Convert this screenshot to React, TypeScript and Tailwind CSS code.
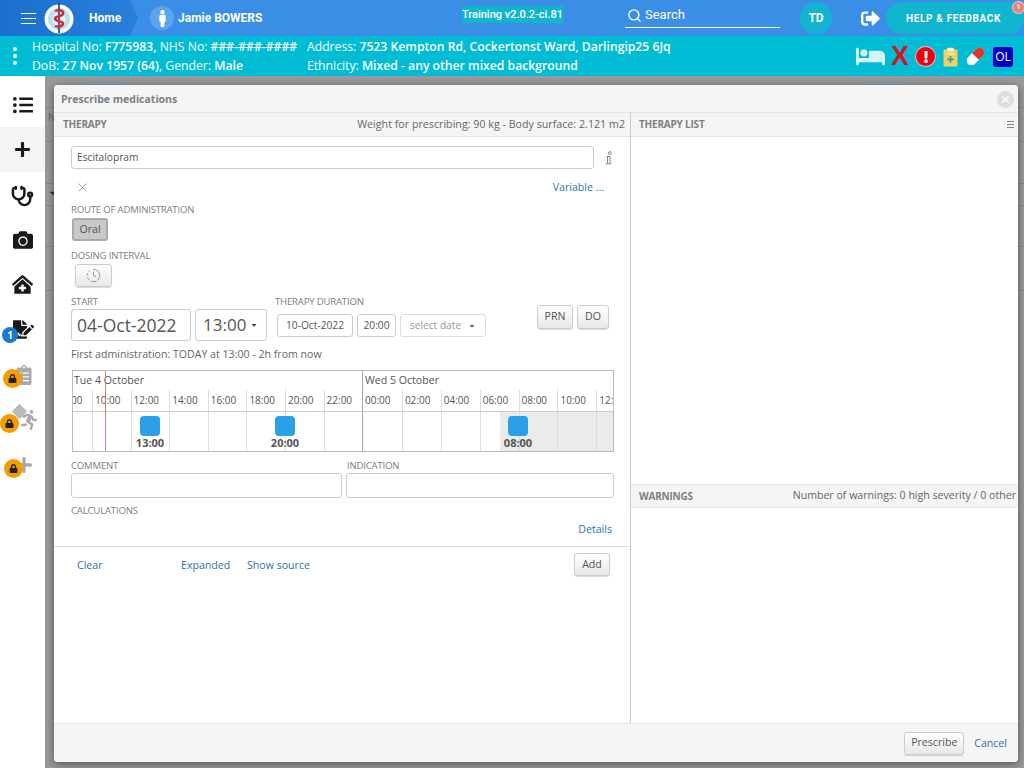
import React from "react";
import { Search, X, ClockFading, Stethoscope } from "lucide-react";
import {
  FaListUl,
  FaPlus,
  FaCamera,
  FaClinicMedical,
  FaFileSignature,
  FaClipboardList,
  FaRunning,
  FaLock,
  FaBed,
  FaMale,
  FaSignOutAlt,
  FaExclamation,
  FaCaretDown,
} from "react-icons/fa";

const HOURS_A = ["10:00", "12:00", "14:00", "16:00", "18:00", "20:00", "22:00"];
const HOURS_B = ["00:00", "02:00", "04:00", "06:00", "08:00", "10:00"];

function Logo() {
  return (
    <svg viewBox="0 0 30 32" className="w-[30px] h-[32px]">
      <circle cx="15" cy="17" r="14.5" fill="#fff" />
      <circle cx="15" cy="17" r="11" fill="#b9dff0" />
      <circle cx="15" cy="17" r="6.5" fill="#e8f5fb" />
      <path d="M15 1v30" stroke="#1c3f7a" strokeWidth="1.6" />
      <path d="M11 9c5-2 9 0 8 3s-9 2-8 5 9 2 8 5-6 3-8 2" fill="none" stroke="#d22a35" strokeWidth="2.4" />
    </svg>
  );
}

function PillIcon() {
  return (
    <svg viewBox="0 0 22 22" className="w-[21px] h-[21px]">
      <g transform="rotate(-45 11 11)">
        <rect x="0" y="6" width="22" height="10" rx="5" fill="#fff" />
        <path d="M11 6h6a5 5 0 0 1 0 10h-6z" fill="#e0352b" />
      </g>
    </svg>
  );
}

function ClipboardIcon() {
  return (
    <svg viewBox="0 0 16 20" className="w-[15px] h-[20px]">
      <rect x="0.5" y="2" width="15" height="18" rx="1.5" fill="#f4cf62" />
      <rect x="4.5" y="0" width="7" height="4" rx="1" fill="#fff3c4" />
      <rect x="3.5" y="6" width="9" height="1.2" fill="#fff3c4" />
      <path d="M8 9v7M4.5 12.5h7" stroke="#1aa3c0" strokeWidth="1.8" />
    </svg>
  );
}

function InfoIcon() {
  return (
    <svg viewBox="0 0 7 14" className="w-[7px] h-[14px]" fill="none" stroke="#888" strokeWidth="1">
      <circle cx="4.8" cy="2" r="1.4" />
      <path d="M1.5 5.5h3.5v7M0.5 12.8h6M2.5 5.5v7" />
    </svg>
  );
}

function LockBadge({ className }: { className: string }) {
  return (
    <span className={`absolute w-[19px] h-[19px] rounded-full bg-[#f59c00] flex items-center justify-center ${className}`}>
      <FaLock className="text-[9px] text-[#222]" />
    </span>
  );
}

function Label({ children, className = "" }: { children: React.ReactNode; className?: string }) {
  return <div className={`text-[9.6px] leading-[12px] tracking-[-0.2px] text-[#808080] ${className}`}>{children}</div>;
}

function Btn({ children, className = "" }: { children: React.ReactNode; className?: string }) {
  return (
    <div className={`flex items-center justify-center rounded-[3px] border border-[#ccc] bg-gradient-to-b from-white to-[#e8e8e8] shadow-[0_1px_1px_rgba(0,0,0,0.15)] text-[10.6px] text-[#555] ${className}`}>
      {children}
    </div>
  );
}

function Field({ children, className = "" }: { children?: React.ReactNode; className?: string }) {
  return <div className={`flex items-center rounded-[3px] border border-[#ccc] bg-white text-[#555] ${className}`}>{children}</div>;
}

function Link({ children, className = "" }: { children: React.ReactNode; className?: string }) {
  return <span className={`text-[10.6px] leading-[14px] text-[#2a72a8] ${className}`}>{children}</span>;
}

function Marker({ time, className }: { time: string; className: string }) {
  return (
    <div className={`absolute top-[4px] w-[40px] flex flex-col items-center ${className}`}>
      <div className="w-[20px] h-[20px] rounded-[4px] bg-[#2aa0e6]" />
      <div className="text-[11px] leading-[14px] font-bold text-[#555]">{time}</div>
    </div>
  );
}

function Timeline() {
  return (
    <div className="relative mt-[8px] w-[542px] h-[82px] border border-[#bbb] text-[10px] text-[#555] overflow-hidden">
      <div className="flex h-[41px] border-b border-[#ccc]">
        <div className="w-[290px] shrink-0 border-r border-[#aaa]">
          <div className="h-[19px] pl-[1px] text-[10.6px] leading-[19px]">Tue 4 October</div>
          <div className="flex h-[21px] leading-[21px]">
            <div className="w-[19px] shrink-0 overflow-hidden"><span className="-ml-[2px] block">00</span></div>
            {HOURS_A.map((h) => (
              <div key={h} className="w-[38.6px] shrink-0 border-l border-[#ddd] pl-[2px]">{h}</div>
            ))}
          </div>
        </div>
        <div className="flex-1 min-w-0">
          <div className="h-[19px] pl-[2px] text-[10.6px] leading-[19px]">Wed 5 October</div>
          <div className="flex h-[21px] leading-[21px]">
            {HOURS_B.map((h, i) => (
              <div key={h} className={`w-[38.9px] shrink-0 pl-[2px] ${i > 0 ? "border-l border-[#ddd]" : ""}`}>{h}</div>
            ))}
            <div className="flex-1 min-w-0 border-l border-[#ddd] pl-[2px] overflow-hidden">12:</div>
          </div>
        </div>
      </div>
      <div className="relative flex h-[39px]">
        <div className="w-[290px] shrink-0 flex border-r border-[#aaa]">
          <div className="w-[19px] shrink-0" />
          {HOURS_A.map((h) => (
            <div key={h} className="w-[38.6px] shrink-0 border-l border-[#ddd]" />
          ))}
        </div>
        <div className="flex-1 min-w-0 flex">
          {HOURS_B.map((h, i) => (
            <div key={h} className={`w-[38.9px] shrink-0 ${i > 0 ? "border-l border-[#ddd]" : ""} ${i === 3 ? "bg-gradient-to-r from-white from-50% to-[#ebebeb] to-50%" : ""} ${i > 3 ? "bg-[#ebebeb]" : ""}`} />
          ))}
          <div className="flex-1 min-w-0 border-l border-[#ddd] bg-[#ebebeb]" />
        </div>
        <Marker time="13:00" className="left-[57px]" />
        <Marker time="20:00" className="left-[192px]" />
        <Marker time="08:00" className="left-[425px]" />
      </div>
      <div className="absolute left-[32px] top-0 bottom-0 w-px bg-[#cf7f78]" />
    </div>
  );
}

function LeftPane() {
  return (
    <div className="w-[577px] shrink-0 border-r border-[#ccc] flex flex-col">
      <div className="h-[25px] shrink-0 bg-[#f5f5f5] border-y border-[#e5e5e5] flex items-center justify-between pl-[9px] pr-[5px]">
        <span className="text-[10px] font-bold text-[#808080] tracking-[-0.2px]">THERAPY</span>
        <span className="text-[10.7px] text-[#666]">Weight for prescribing: 90 kg - Body surface: 2.121 m2</span>
      </div>
      <div className="relative h-[409px] shrink-0 pl-[17px]">
        <div className="flex items-center mt-[9px]">
          <Field className="w-[523px] h-[23px] px-[5px] text-[10.2px]">Escitalopram</Field>
          <span className="ml-[11px]"><InfoIcon /></span>
        </div>
        <div className="flex items-center justify-between w-[533px] mt-[11px] h-[14px] pl-[4px]">
          <X className="w-[15px] h-[15px] text-[#888]" strokeWidth={1.2} />
          <Link>Variable ...</Link>
        </div>
        <Label className="mt-[10px]">ROUTE OF ADMINISTRATION</Label>
        <div className="mt-[2px] ml-[1px] w-[36px] h-[23px] rounded-[3px] border-2 border-[#aaa] bg-[#c9c9c9] flex items-center justify-center text-[10.6px] text-[#555]">Oral</div>
        <Label className="mt-[9px]">DOSING INTERVAL</Label>
        <Btn className="mt-[2px] ml-[4px] w-[37px] h-[23px]">
          <ClockFading className="w-[15px] h-[15px] text-[#777]" strokeWidth={1.2} />
        </Btn>
        <div className="flex mt-[9px] h-[38px]">
          <div className="w-[124px] shrink-0">
            <Label>START</Label>
            <Field className="mt-[1px] w-[120px] h-[32px] pl-[5px] text-[17.5px]">04-Oct-2022</Field>
          </div>
          <div className="w-[80px] shrink-0 pt-[13px]">
            <Field className="w-[72px] h-[32px] pl-[7px] text-[17px]">
              13:00
              <FaCaretDown className="ml-[4px] text-[8px] text-[#444]" />
            </Field>
          </div>
          <div className="w-[262px] shrink-0">
            <Label>THERAPY DURATION</Label>
            <div className="flex gap-[4px] ml-[2px] mt-[6px] text-[10.2px]">
              <Field className="w-[76px] h-[23px] justify-center">10-Oct-2022</Field>
              <Field className="w-[39px] h-[23px] justify-center">20:00</Field>
              <Field className="w-[86px] h-[23px] justify-center text-[#999] border-[#ddd]">
                select date
                <FaCaretDown className="ml-[7px] text-[8px] text-[#666]" />
              </Field>
            </div>
          </div>
          <div className="flex gap-[4px] pt-[9px]">
            <Btn className="w-[36px] h-[24px]">PRN</Btn>
            <Btn className="w-[32px] h-[24px]">DO</Btn>
          </div>
        </div>
        <div className="mt-[12px] text-[10.6px] leading-[16px] text-[#666]">First administration: TODAY at 13:00 - 2h from now</div>
        <div className="ml-[1px]">
          <Timeline />
        </div>
        <div className="flex gap-[4px] mt-[8px] w-[543px]">
          <div className="w-[271px] shrink-0">
            <Label>COMMENT</Label>
            <Field className="mt-[1px] h-[25px]" />
          </div>
          <div className="flex-1">
            <Label className="pl-[1px]">INDICATION</Label>
            <Field className="mt-[1px] h-[25px]" />
          </div>
        </div>
        <Label className="mt-[7px]">CALCULATIONS</Label>
        <div className="w-[541px] text-right -mt-[2px]">
          <Link>Details</Link>
        </div>
      </div>
      <div className="relative flex items-center h-[37px] border-t border-[#ddd] pl-[23px]">
        <Link className="w-[104px]">Clear</Link>
        <Link className="w-[66px]">Expanded</Link>
        <Link>Show source</Link>
        <Btn className="absolute left-[520px] top-[6px] w-[36px] h-[23px]">Add</Btn>
      </div>
    </div>
  );
}

function RightPane() {
  return (
    <div className="flex-1 min-w-0 flex flex-col">
      <div className="h-[25px] shrink-0 bg-[#f5f5f5] border-y border-[#e5e5e5] flex items-center justify-between pl-[8px] pr-[4px]">
        <span className="text-[10px] font-bold text-[#808080] tracking-[-0.2px]">THERAPY LIST</span>
        <span className="flex flex-col gap-[2px] w-[7px]">
          <span className="h-px bg-[#888]" />
          <span className="h-px bg-[#888]" />
          <span className="h-px bg-[#888]" />
        </span>
      </div>
      <div className="h-[347px] shrink-0" />
      <div className="h-[24px] shrink-0 bg-[#f5f5f5] border-y border-[#e5e5e5] flex items-center justify-between pl-[8px] pr-[2px]">
        <span className="text-[10px] font-bold text-[#808080] tracking-[-0.2px]">WARNINGS</span>
        <span className="text-[10.6px] text-[#666]">Number of warnings: 0 high severity / 0 other</span>
      </div>
      <div className="flex-1" />
    </div>
  );
}

function Sidebar() {
  const item = "relative h-[45px] flex items-center justify-center text-[#1a1a1a]";
  return (
    <aside className="w-[45px] shrink-0 bg-white pt-[6px]">
      <div className={item}><FaListUl className="text-[20px]" /></div>
      <div className={`${item} bg-[#f5f5f5]`}><FaPlus className="text-[17px]" /></div>
      <div className={item}><Stethoscope className="w-[23px] h-[23px] mt-[3px]" strokeWidth={2.6} /></div>
      <div className={item}><FaCamera className="text-[20px]" /></div>
      <div className={item}><FaClinicMedical className="text-[21px]" /></div>
      <div className={item}>
        <FaFileSignature className="text-[21px] ml-[2px]" />
        <span className="absolute left-[2px] top-[20px] w-[16px] h-[16px] rounded-full bg-[#1a78d2] text-white text-[10px] font-bold flex items-center justify-center">1</span>
      </div>
      <div className={`${item} text-[#aaa]`}>
        <FaClipboardList className="text-[20px] ml-[3px]" />
        <LockBadge className="left-[3px] top-[17px]" />
      </div>
      <div className={`${item} text-[#aaa]`}>
        <span className="absolute left-[14px] top-[9px] w-[11px] h-[11px] rotate-45 bg-[#bbb]" />
        <FaRunning className="relative text-[20px] ml-[12px]" />
        <LockBadge className="left-[0px] top-[17px]" />
      </div>
      <div className={`${item} text-[#aaa]`}>
        <FaPlus className="text-[18px] ml-[3px]" />
        <LockBadge className="left-[4px] top-[17px]" />
      </div>
    </aside>
  );
}

export default function App() {
  return (
    <div className="relative w-[1024px] h-[768px] overflow-hidden flex flex-col bg-white font-['Open_Sans',sans-serif]">
      <header className="h-[36px] shrink-0 bg-[#3a8ee6] flex items-center text-white relative">
        <div className="w-[138px] h-full bg-gradient-to-r from-[#1a6fcf] to-[#2a7fdd] [clip-path:polygon(0_0,130px_0,138px_18px,130px_36px,0_36px)] flex items-center pl-[21px]">
          <span className="flex flex-col gap-[4px] w-[15px]">
            <span className="h-px bg-white" />
            <span className="h-px bg-white" />
            <span className="h-px bg-white" />
          </span>
          <span className="ml-[8px]"><Logo /></span>
          <span className="ml-[15px] text-[12px] font-bold font-['Roboto',sans-serif]">Home</span>
        </div>
        <span className="ml-[12px] w-[24px] h-[24px] rounded-full bg-[#5ba5ee] flex items-center justify-center">
          <FaMale className="text-[17px]" />
        </span>
        <span className="ml-[4px] text-[12px] font-bold font-['Roboto',sans-serif]">Jamie BOWERS</span>
        <span className="absolute left-[462px] top-[6px] bg-[#12b5cf] text-[11px] leading-[17px] font-medium whitespace-nowrap font-['Roboto',sans-serif]">Training v2.0.2-ci.81</span>
        <div className="absolute left-[625px] top-[3px] w-[155px] h-[25px] border-b border-white flex items-center gap-[3px] pl-[2px]">
          <Search className="w-[15px] h-[15px]" strokeWidth={2.2} />
          <span className="text-[13px] font-['Roboto',sans-serif]">Search</span>
        </div>
        <span className="absolute left-[800px] top-[2px] w-[32px] h-[32px] rounded-full bg-[#12b5cf] flex items-center justify-center text-[12px] font-bold font-['Roboto',sans-serif]">TD</span>
        <FaSignOutAlt className="absolute left-[861px] top-[9px] text-[19px]" />
        <div className="absolute left-[886px] top-[2px] w-[138px] h-[32px] rounded-l-[16px] rounded-r-[14px] bg-[#12b5cf] flex items-center justify-center text-[10px] font-bold font-['Roboto',sans-serif] tracking-[0.65px] pr-[3px]">HELP &amp; FEEDBACK</div>
        <span className="absolute left-[1012px] top-[1px] w-[13px] h-[13px] rounded-full bg-[#ee7f7a] border border-white/60 flex items-center justify-center text-[7px] font-bold">1</span>
      </header>

      <div className="h-[40px] shrink-0 bg-[#00bcd4] text-white flex items-center text-[12.2px] leading-[19px] whitespace-nowrap">
        <span className="w-[32px] shrink-0 flex flex-col items-center gap-[3px] pr-[2px]">
          <span className="w-[4px] h-[4px] rounded-full bg-white" />
          <span className="w-[4px] h-[4px] rounded-full bg-white" />
          <span className="w-[4px] h-[4px] rounded-full bg-white" />
        </span>
        <div className="w-[275px] shrink-0">
          <div>Hospital No: <b className="font-semibold">F775983,</b> NHS No: <b className="font-semibold">###-###-####</b></div>
          <div>DoB: <b className="font-semibold">27 Nov 1957 (64),</b> Gender: <b className="font-semibold">Male</b></div>
        </div>
        <div className="w-[540px] shrink-0">
          <div>Address: <b className="font-semibold">7523 Kempton Rd, Cockertonst Ward, Darlingip25 6Jq</b></div>
          <div>Ethnicity: <b className="font-semibold">Mixed - any other mixed background</b></div>
        </div>
        <div className="flex items-center gap-[7px] ml-[9px] pt-[1px]">
          <FaBed className="text-[29px] text-[#d8f3f8]" />
          <span className="text-[#d8121c] text-[27px] leading-none font-black font-['Liberation_Sans',sans-serif] -mx-[1px]">X</span>
          <span className="w-[21px] h-[21px] rounded-full bg-[#ee0011] border border-white/70 flex items-center justify-center">
            <FaExclamation className="text-[12px]" />
          </span>
          <ClipboardIcon />
          <PillIcon />
          <span className="w-[20px] h-[20px] rounded-[3px] bg-[#0000c0] flex items-center justify-center text-[12px]">OL</span>
        </div>
      </div>

      <div className="flex-1 flex min-h-0">
        <Sidebar />
        <main className="flex-1 bg-[#999]">
          <div className="h-[32px] border-b border-[#888] flex pl-[40px] pt-[4px]">
            <div className="w-[37px] bg-[#8d99a3]" />
            <div className="w-[42px] ml-[741px] bg-[#8d99a3]" />
          </div>
          <div className="h-[34px] border-b border-[#888] pl-[3px] pt-[2px] text-[10px] text-[#666]">N</div>
          <div className="h-[42px] border-b border-[#888]" />
          <div className="h-[22px] border-b border-[#888] pl-[3px] pt-[4px]"><FaCaretDown className="text-[10px] text-[#333]" /></div>
          <div className="h-[41px] border-b border-[#888]" />
          <div className="h-[44px] border-b border-[#888]" />
        </main>
      </div>

      {/* modal dialog over the dimmed page */}
      <div className="absolute left-[54px] top-[85px] w-[964px] h-[677px] rounded-[4px] bg-white shadow-[0_2px_8px_rgba(0,0,0,0.45)] overflow-hidden flex flex-col">
        <div className="h-[27px] shrink-0 bg-[#f5f5f5] flex items-center justify-between pl-[7px] pr-[4px] pt-[2px]">
          <span className="text-[10.5px] font-bold text-[#7a7f85]">Prescribe medications</span>
          <span className="w-[17px] h-[17px] rounded-full bg-[#dedede] flex items-center justify-center">
            <X className="w-[11px] h-[11px] text-white" strokeWidth={3} />
          </span>
        </div>
        <div className="flex-1 min-h-0 flex">
          <LeftPane />
          <RightPane />
        </div>
        <div className="h-[39px] shrink-0 bg-[#f5f5f5] border-t border-[#e5e5e5] flex items-center justify-end gap-[10px] pr-[11px]">
          <Btn className="w-[60px] h-[23px]">Prescribe</Btn>
          <Link>Cancel</Link>
        </div>
      </div>
    </div>
  );
}
